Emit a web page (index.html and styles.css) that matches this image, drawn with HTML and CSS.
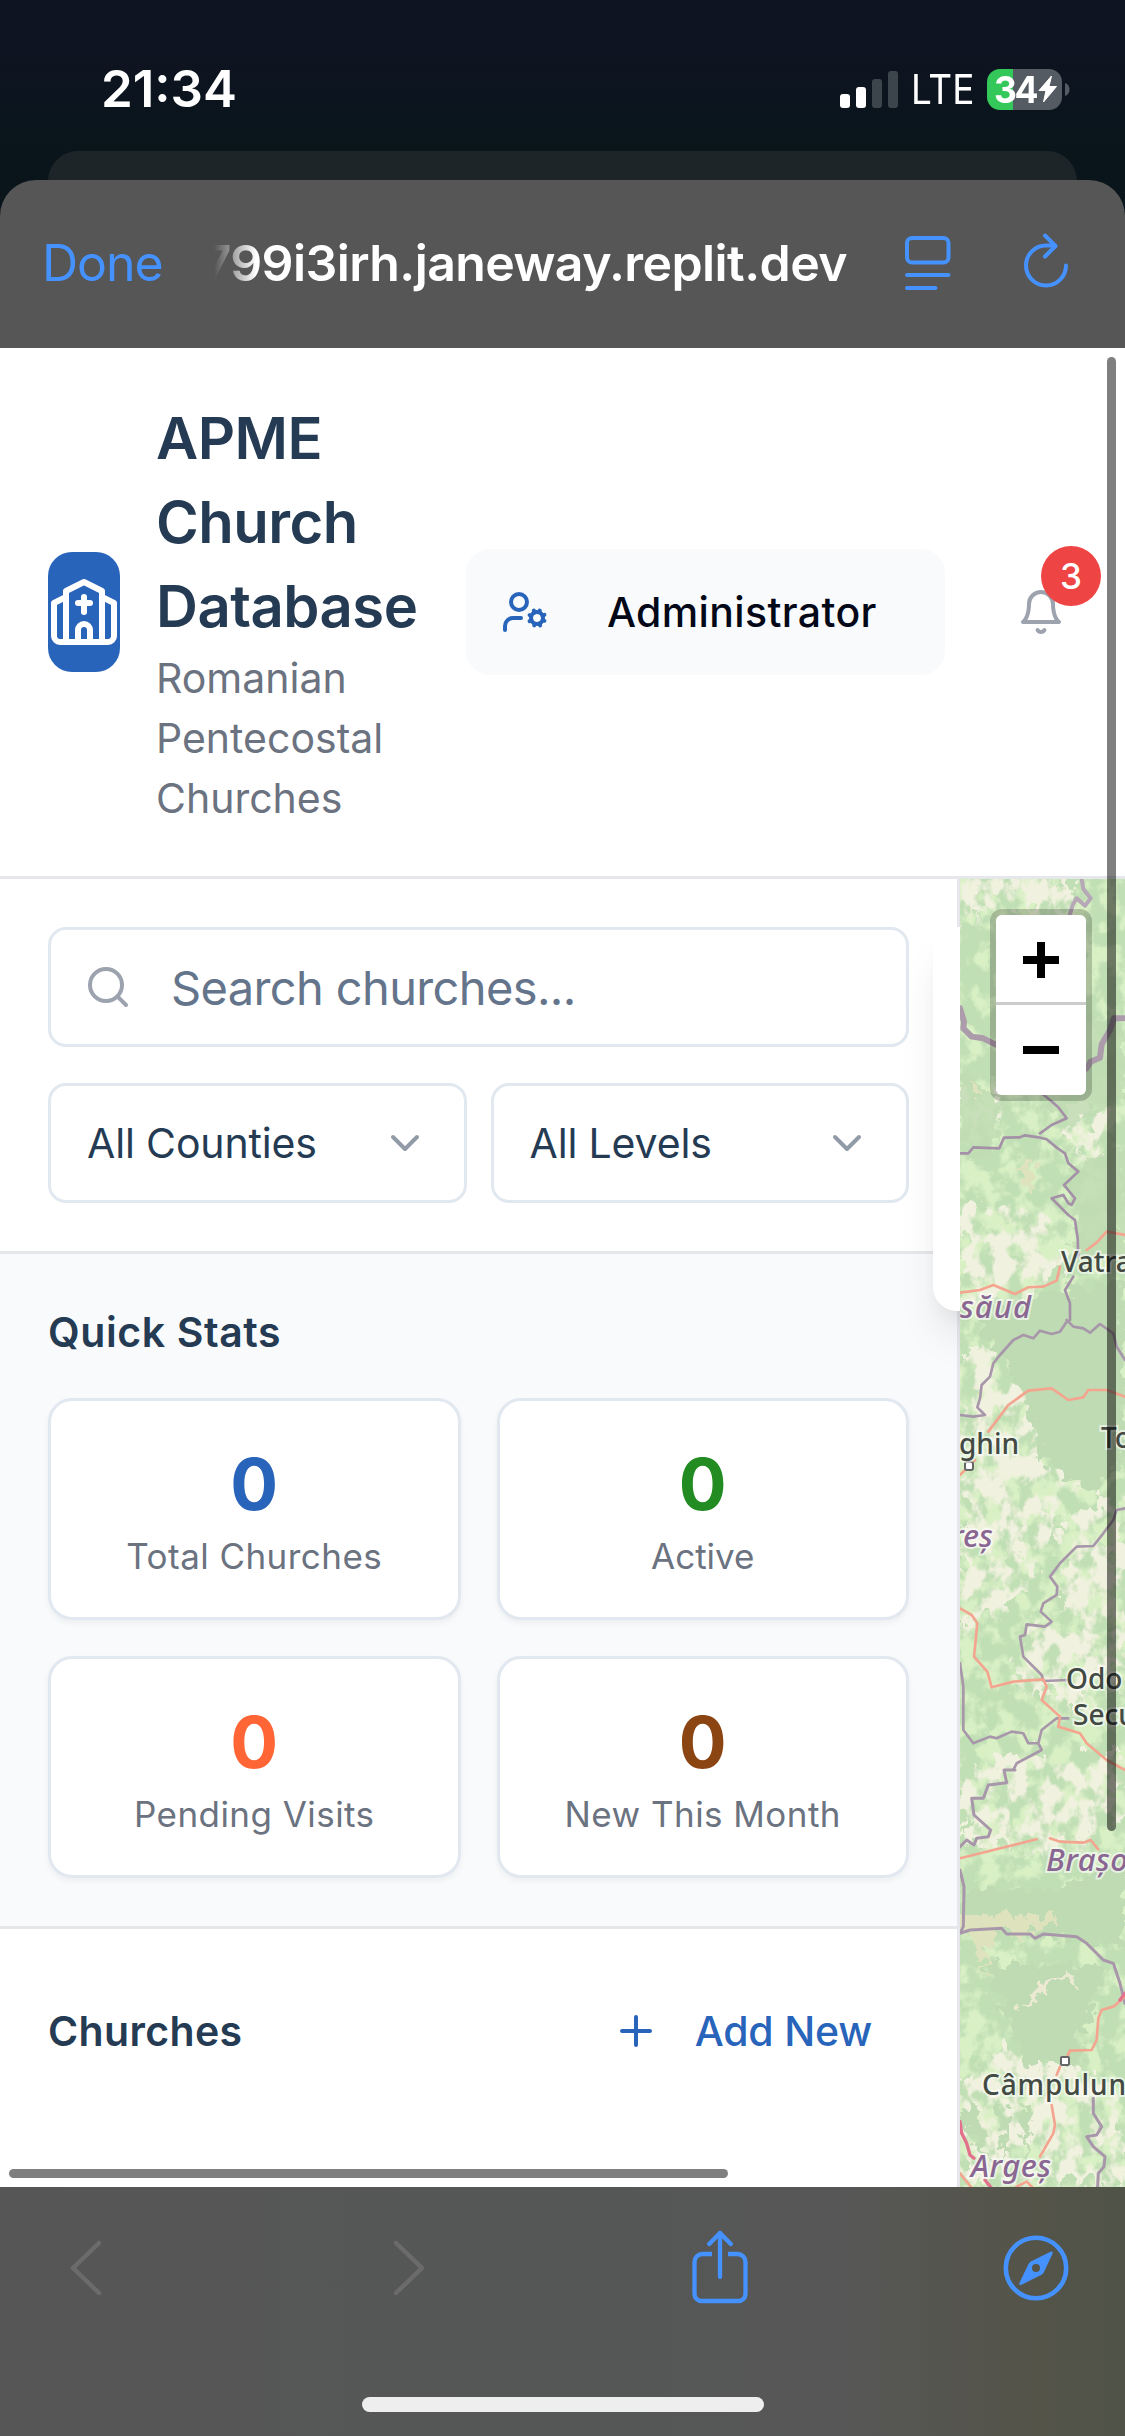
FILE: index.html
```html
<!DOCTYPE html>
<html lang="en">
<head>
<meta charset="utf-8">
<title>APME Church Database</title>
<link rel="stylesheet" href="styles.css">
</head>
<body>
<div class="phone">
  <div class="status">
    <span class="time">21:34</span>
    <div class="indicators">
      <svg class="signal" width="58" height="37" viewBox="0 0 58 37">
        <rect x="0" y="23" width="10" height="14" rx="3" fill="#fff"/>
        <rect x="16" y="16" width="10" height="21" rx="3" fill="#fff"/>
        <rect x="32" y="8" width="10" height="29" rx="3" fill="#3c444c"/>
        <rect x="48" y="0" width="10" height="37" rx="3" fill="#3c444c"/>
      </svg>
      <span class="lte">LTE</span>
      <div class="battery">
        <span class="level">34</span>
        <svg width="19" height="28" viewBox="0 0 19 28"><path d="M13.500 1 1 15.500h7L5.500 27 18.500 11.500h-7.500z" fill="#fff" stroke="#fff" stroke-linejoin="round"/></svg>
      </div>
      <svg class="nub" width="5" height="13" viewBox="0 0 5 13"><path d="M0 0c6 2 6 11 0 13z" fill="#555b62"/></svg>
    </div>
  </div>
  <div class="back-card"></div>

  <div class="sheet">
    <div class="browser-bar">
      <span class="done">Done</span>
      <div class="url"><span>799i3irh.janeway.replit.dev</span></div>
      <svg class="reader" width="46" height="54" viewBox="0 0 46 54" fill="none" stroke="#4592ff" stroke-width="4" stroke-linecap="round">
        <rect x="2" y="2" width="41.500" height="24.500" rx="5"/><path d="M2 39h41.500M2 52h28.500"/>
      </svg>
      <svg class="reload" width="46" height="56" viewBox="0 0 46 56" fill="none" stroke="#4592ff" stroke-width="4" stroke-linecap="round" stroke-linejoin="round">
        <path d="M42 32.500a20 20 0 1 1-20-20h9M21 2.500 31.500 13 21 23.500"/>
      </svg>
    </div>

    <div class="webview">
      <header class="header">
        <div class="logo">
          <svg width="72" height="72" viewBox="0 0 24 24" fill="none" stroke="#fff" stroke-width="2" stroke-linecap="round" stroke-linejoin="round"><path d="m18 7 4 2v11a2 2 0 0 1-2 2H4a2 2 0 0 1-2-2V9l4-2"/><path d="M14 22v-4a2 2 0 0 0-4 0v4"/><path d="M18 22V5l-6-3-6 3v17"/><path d="M12 7v5"/><path d="M10 9h4"/></svg>
        </div>
        <div class="brand">
          <h1>APME Church Database</h1>
          <p>Romanian Pentecostal Churches</p>
        </div>
        <div class="role">
          <svg width="48" height="48" viewBox="0 0 24 24" fill="none" stroke="#2964bb" stroke-width="2" stroke-linecap="round" stroke-linejoin="round"><circle cx="18" cy="15" r="3"/><circle cx="9" cy="7" r="4"/><path d="M10 15H6a4 4 0 0 0-4 4v2"/><path d="m21.700 16.400-.9-.3"/><path d="m15.200 13.900-.9-.3"/><path d="m16.600 18.700.3-.9"/><path d="m19.100 12.200.3-.9"/><path d="m19.600 18.700-.4-1"/><path d="m16.800 12.300-.4-1"/><path d="m14.300 16.600 1-.4"/><path d="m20.700 13.800 1-.4"/></svg>
          <span>Administrator</span>
        </div>
        <div class="bell">
          <svg width="48" height="48" viewBox="0 0 24 24" fill="none" stroke="#9ca3af" stroke-width="2" stroke-linecap="round" stroke-linejoin="round"><path d="M6 8a6 6 0 0 1 12 0c0 7 3 9 3 9H3s3-2 3-9"/><path d="M10.300 21a1.940 1.940 0 0 0 3.400 0"/></svg>
          <span class="badge">3</span>
        </div>
      </header>

      <div class="content">
        <aside class="sidebar">
          <section class="filters">
            <div class="field search">
              <svg width="48" height="48" viewBox="0 0 24 24" fill="none" stroke="#9ca3af" stroke-width="2" stroke-linecap="round" stroke-linejoin="round"><circle cx="11" cy="11" r="8"/><path d="m21 21-4.300-4.300"/></svg>
              <span>Search churches...</span>
            </div>
            <div class="selects">
              <div class="field select"><span>All Counties</span><svg width="48" height="48" viewBox="0 0 24 24" fill="none" stroke="#919ba8" stroke-width="2" stroke-linecap="round" stroke-linejoin="round"><path d="m6 9 6 6 6-6"/></svg></div>
              <div class="field select"><span>All Levels</span><svg width="48" height="48" viewBox="0 0 24 24" fill="none" stroke="#919ba8" stroke-width="2" stroke-linecap="round" stroke-linejoin="round"><path d="m6 9 6 6 6-6"/></svg></div>
            </div>
          </section>
          <section class="stats">
            <h2>Quick Stats</h2>
            <div class="stat-grid">
              <div class="stat"><b class="blue">0</b><span>Total Churches</span></div>
              <div class="stat"><b class="green">0</b><span class="plain">Active</span></div>
              <div class="stat"><b class="orange">0</b><span>Pending Visits</span></div>
              <div class="stat"><b class="brown">0</b><span>New This Month</span></div>
            </div>
          </section>
          <section class="list-head">
            <h2>Churches</h2>
            <div class="add">
              <svg width="48" height="48" viewBox="0 0 24 24" fill="none" stroke="#2964bb" stroke-width="2" stroke-linecap="round"><path d="M5 12h14M12 5v14"/></svg>
              <span>Add New</span>
            </div>
          </section>
        </aside>
        <div class="overlay-panel"></div>

        <div class="map">
          <svg width="165" height="1308" viewBox="0 0 165 1308">
            <defs>
              <filter id="meadow" x="0" y="0" width="100%" height="100%" color-interpolation-filters="sRGB">
                <feTurbulence type="fractalNoise" baseFrequency=".05 .045" numOctaves="4" seed="4"/>
                <feColorMatrix values="0 0 0 0 .85  0 0 0 0 .94  0 0 0 0 .77  6 0 0 0 -2.700"/>
              </filter>
              <filter id="fields" x="0" y="0" width="100%" height="100%" color-interpolation-filters="sRGB">
                <feTurbulence type="fractalNoise" baseFrequency=".06 .045" numOctaves="4" seed="11" result="n"/>
                <feColorMatrix in="n" values="0 0 0 0 1  0 0 0 0 1  0 0 0 0 1  0 6 0 0 -2.500" result="m"/>
                <feDisplacementMap in="SourceGraphic" in2="n" scale="60" xChannelSelector="R" yChannelSelector="G" result="d"/>
                <feComposite in="d" in2="m" operator="in"/>
              </filter>
              <filter id="rough" x="-20%" y="-20%" width="140%" height="140%" color-interpolation-filters="sRGB">
                <feTurbulence type="fractalNoise" baseFrequency=".08" numOctaves="3" seed="2" result="n"/>
                <feDisplacementMap in="SourceGraphic" in2="n" scale="30" xChannelSelector="R" yChannelSelector="G"/>
              </filter>
            </defs>
            <rect width="165" height="1308" fill="#c1dfb5"/>
            <rect width="165" height="1308" filter="url(#meadow)"/>
            <g filter="url(#fields)" fill="#f1f1df">
              <rect width="165" height="1308" fill="none"/>
              <path d="M0 0h110l10 30-40 10-30-10-50 20zM0 215l25 5 5 25-30 10zM100 220l40 20 5 50-30-10zM0 340l60-20 30 20 20 50-40 30-70 10zM0 480l40-20 50 60 20 50-50 20-60 60zM0 600l60-30 50 30 20-20-40 80-20 60-70 40zM100 650l65-40v150l-65-10zM60 760l60-30 45 20v60l-60 30-50-40zM0 890l80-10 85 0v60l-65 40-100-10zM0 1190l50-20 90 30 25 30v80h-165z"/>
            </g>
            <g filter="url(#rough)" fill="#bfdbb3">
              <path d="M15 440l60-25 90-10v170l-30 40-50-30-20-70zM0 1010l100 0 65-30v90l-100-15-65 0zM25 1085h120l-30 100-50 0zM0 1235l14-20 16 70zM35 1225l12 0 0 70zM60 1225h10l-2 70z"/>
              <path d="M70 120l95 30v60l-60 40-30-50zM0 190l40 30-10 60-30-10zM110 290l55-20v110l-50 0z" opacity=".8"/>
            </g>
            <g fill="#dfe3bd" filter="url(#rough)"><path d="M0 1035h95v8l-25 4-8 18-10-16-20 4-8 40-10-36-14-6z"/><path d="M58 290l14-12 6 22-8 12zM12 205l10 6-6 8z"/></g>
            <path d="M60 1130l20-25 30-12 6 10-20 0-28 26z" fill="#ece9d2" filter="url(#rough)"/>

            <g fill="none" stroke-linejoin="round" stroke-linecap="round">
              <g transform="scale(.3333) translate(-180 -27)">
                <g stroke="#a491a8">
                  <path stroke-width="18" stroke="#ac9cab" d="M180 415l12 40 -2 20 25 25 35 5 60 30M560 595l12-20 28-12 5-40 25-43 12-35h40"/>
                  <path stroke-width="12" stroke="#b7a8b8" d="M545 27l5 30 22 28-17 22-25-22-12 20-10 35"/>
                  <path stroke-width="8" d="M425 670l25 20 25 22 25 33-45 20-35 25M180 850h25l15-18 78 3 14-32 48-1 15-6 40 6 25 6 30 25 25 17 10 30 30 25-43 40 33 40-10 20-10-5-15-25-35 10 50 50 20 15 8 55 2 55M520 1220l-25 40 15 40v50"/>
                </g>
                <path stroke="#f3a58f" stroke-width="8" d="M180 1268l60-8 40-15 65 27 40-20 45-2 40-18 10-42M560 1140l30-22 30-33 55 10"/>
              </g>
              <g transform="translate(-60 441) scale(.3333)">
                <g stroke="#a897aa" stroke-width="8">
                  <path d="M500 0l20 20 30 5 20 13 30-26 40 28 10 40 25 40M500 5l-20 30-25 7-35-10-20 23-30-10-30 15-40 45-20 25-10 40-25 25-5 40-8 27 23 23-35 5-40-5"/>
                  <path d="M675 565l-25 5-10 30-30 40-30 38-50 2-50 50-30 40 22 30-2 25-40 25-8 25 33 30-20 15-55-7-5 32-15 5 10 60 55 55 5 18 75-3M180 1030l10 70v130l30 40 50-20 20 5 45-20 35 5 15 30h30l10-40 45-35h35M415 1270l10 20-75 40-10 20"/>
                </g>
                <path stroke="#f3a58f" stroke-width="8" d="M265 335l60-80 60-43 70-7 50 35 45-8 15-22h55l55 20M180 465l45-45M180 865l35 20 17 25-10 100 40 45 13 47 65-17 90-7 10 22-15 40 55 50-5 30 65 20 20 30 60 50 55 30"/>
              </g>
              <g transform="translate(-60 891) scale(.3333)">
                <path stroke="#a897aa" stroke-width="9" d="M345 0h-33l8 38-55 7-15 40h-35l7 50 50 45-7 20-35 5-8 20-22-15-20 20M180 300l12 50-2 120-10 20 30-10 95-5 15 17 70 0 15 13 25-13 100 8 30 20 50 50 30 10 20 60 15 60M580 985v45l25 40-15 25-30 5 20 30 35 30-3 30-17 20-3 60"/>
                <path stroke="#f3a58f" stroke-width="8" d="M180 265l100-25 130-32M450 205l30 10 70 3 22-8 23 28M675 680l-35 30-35 10-10 25-5 65-15 30-65 2-10 23M480 890l-10 25M455 1005l10 60-5 25-40 70M180 1210l40 50M350 1250l30-15 20 20"/>
                <path stroke="#e2718c" stroke-width="10" d="M180 1055l5 35 15 30 10 35 12 10M255 1230l20 25M675 670l-15 20"/>
              </g>
            </g>
            <g fill="#fff" stroke="#666" stroke-width="2"><rect x="5" y="583" width="8" height="8" rx="2"/><rect x="101" y="1178" width="8" height="8" rx="1"/></g>
            <g class="town">
              <text x="101" y="393">Vatra</text>
              <text x="-1" y="575">ghin</text>
              <text x="141" y="569">To</text>
              <text x="106" y="810">Odo</text>
              <text x="113" y="846">Secu</text>
              <text x="22" y="1216" textLength="144">Câmpulun</text>
            </g>
            <g class="county">
              <text x="0" y="439" textLength="71">săud</text>
              <text x="-9" y="668">reș</text>
              <text x="86" y="992" textLength="82">Brașo</text>
              <text x="11" y="1298" textLength="80">Argeș</text>
            </g>
          </svg>
          <div class="zoom">
            <span><svg width="36" height="36" viewBox="0 0 36 36"><path d="M0 18h36M18 0v36" stroke="#000" stroke-width="8"/></svg></span>
            <span><svg width="36" height="36" viewBox="0 0 36 36"><path d="M0 18h36" stroke="#000" stroke-width="8"/></svg></span>
          </div>
        </div>
      </div>
      <div class="scroll-y"></div>
      <div class="scroll-x"></div>
    </div>

    <nav class="toolbar">
      <div class="tools">
        <svg class="back" width="33" height="56" viewBox="0 0 33 56" fill="none" stroke="#6b6b6b" stroke-width="4.500" stroke-linecap="round" stroke-linejoin="round"><path d="M29 3 3 28l26 25"/></svg>
        <svg class="forward" width="33" height="56" viewBox="0 0 33 56" fill="none" stroke="#6b6b6b" stroke-width="4.500" stroke-linecap="round" stroke-linejoin="round"><path d="M4 3l26 25L4 53"/></svg>
        <svg class="share" width="56" height="74" viewBox="0 0 56 74" fill="none" stroke="#4592ff" stroke-width="4.300" stroke-linecap="round" stroke-linejoin="round"><path stroke-linecap="butt" d="M20 24h-9.500a8 8 0 0 0-8 8v32a7 7 0 0 0 7 7h37a7 7 0 0 0 7-7V32a8 8 0 0 0-8-8H36"/><path d="M28 47V3M17.200 14 28 3l10.800 11"/></svg>
        <svg width="66" height="66" viewBox="0 0 66 66"><circle cx="33" cy="33" r="30.200" fill="none" stroke="#4592ff" stroke-width="4.600"/><path fill="#4592ff" fill-rule="evenodd" d="M47.500 16.700q3-1 2 2L41 37q-1 2-2.500 2.800L18.500 49.700q-3 1-2-2L25.500 29q.8-1.500 2.300-2.500zM33 29a4 4 0 1 0 0 8 4 4 0 0 0 0-8z"/></svg>
      </div>
      <div class="home"></div>
    </nav>
  </div>
</div>
</body>
</html>
```
FILE: styles.css
```css
* { box-sizing: border-box; }
body { margin: 0; font-family: Inter, "Noto Sans", sans-serif; }
h1, h2, p { margin: 0; }
svg { display: block; flex: none; }
span { white-space: nowrap; }

.phone {
  width: 1125px;
  height: 2436px;
  overflow: hidden;
  display: flex;
  flex-direction: column;
  background: linear-gradient(#0e1422 0, #0d1420 70px, #09151b 150px, #09151b 260px);
}

/* iOS status bar */
.status {
  height: 151px;
  flex: none;
  display: flex;
  justify-content: space-between;
  padding: 59px 55px 0 101px;
  color: #fff;
}
.time { font-size: 51px; font-weight: 600; line-height: 60px; }
.indicators { display: flex; height: 60px; align-items: center; }
.lte {
  font-size: 41px;
  line-height: 60px;
  margin-left: 13px;
  width: 75px;
  transform: scaleX(.9);
  transform-origin: left;
}
.battery {
  width: 75px;
  height: 41px;
  margin-left: 1px;
  border-radius: 13px;
  background: linear-gradient(90deg, #34c759 26px, #555b62 26px);
  display: flex;
  align-items: center;
  padding-left: 7px;
}
.level { font-size: 37px; font-weight: 700; line-height: 41px; letter-spacing: -2.500px; width: 44px; transform: scaleX(.96); transform-origin: left; }
.nub { margin-left: 3px; }

.back-card {
  flex: none;
  height: 60px;
  margin: 0 48px -31px;
  border-radius: 30px 30px 0 0;
  background: #1e2528;
}

/* in-app browser */
.sheet {
  flex: 1;
  position: relative;
  display: flex;
  flex-direction: column;
  overflow: hidden;
  border-radius: 36px 36px 0 0;
  background: #565656;
}
.browser-bar {
  height: 168px;
  flex: none;
  display: flex;
  align-items: center;
  padding: 0 55px 2px 42px;
}
.done { font-size: 50px; letter-spacing: -1.070px; color: #4592ff; width: 172px; }
.url {
  width: 634px;
  display: flex;
  justify-content: flex-end;
  overflow: hidden;
  font-size: 50px;
  font-weight: 600;
  letter-spacing: -.58px;
  color: #fff;
  -webkit-mask-image: linear-gradient(90deg, transparent, #000 42px);
  mask-image: linear-gradient(90deg, transparent, #000 42px);
}
.reader { margin-left: 58px; }
.reload { margin: -5px 0 0 73px; }

.webview { position: relative; height: 1839px; flex: none; background: #fff; overflow: hidden; }

.header {
  height: 531px;
  display: flex;
  align-items: center;
  padding: 0 0 0 48px;
  border-bottom: 3px solid #e5e7eb;
}
.logo {
  width: 72px;
  height: 120px;
  border-radius: 24px;
  background: #2964bb;
  display: flex;
  align-items: center;
}
.brand { width: 264px; margin-left: 36px; }
h1 { font-size: 58px; font-weight: 600; line-height: 84px; letter-spacing: -.5px; color: #243b53; }
.brand p { font-size: 41px; line-height: 60px; color: #6b7280; }
.role {
  width: 479px;
  height: 126px;
  margin-left: 46px;
  padding-left: 35px;
  border-radius: 24px;
  background: #f9fafc;
  display: flex;
  align-items: center;
  gap: 58px;
  font-size: 41px;
  font-weight: 500;
  letter-spacing: .37px;
  color: #020817;
}
.bell { position: relative; margin-left: 72px; }
.badge {
  position: absolute;
  left: 24px;
  top: -42px;
  width: 60px;
  height: 60px;
  border-radius: 50%;
  background: #ef4444;
  color: #fff;
  font-size: 35px;
  font-weight: 500;
  line-height: 60px;
  text-align: center;
}

.content { position: relative; display: flex; height: 1308px; }
.sidebar { width: 960px; border-right: 3px solid #e5e7eb; background: #fff; }
.filters {
  padding: 48px;
  height: 375px;
  border-bottom: 3px solid #e5e7eb;
  display: flex;
  flex-direction: column;
  gap: 36px;
}
.field {
  height: 120px;
  border: 3px solid #e2e8f0;
  border-radius: 18px;
  background: #fff;
  display: flex;
  align-items: center;
}
.search { padding-left: 33px; gap: 39px; font-size: 47px; letter-spacing: -.63px; color: #64748b; }
.selects { display: grid; grid-template-columns: 1fr 1fr; gap: 24px; }
.select {
  justify-content: space-between;
  padding: 0 35px 0 36px;
  font-size: 41px;
  letter-spacing: -.15px;
  color: #243b53;
}

.stats { height: 675px; padding: 48px; background: #f9fafc; border-bottom: 3px solid #e5e7eb; }
h2 { font-size: 41px; font-weight: 600; line-height: 60px; letter-spacing: .6px; color: #243b53; }
.stat-grid { margin-top: 36px; display: grid; grid-template-columns: 1fr 1fr; gap: 36px; }
.stat {
  height: 222px;
  padding: 35px 0;
  border: 3px solid #e2e8f0;
  border-radius: 24px;
  background: #fff;
  box-shadow: 0 3px 6px rgba(0, 0, 0, .05);
  display: flex;
  flex-direction: column;
  align-items: center;
}
.stat b { font-size: 71px; font-weight: 700; line-height: 96px; }
.stat span { font-size: 35px; line-height: 48px; letter-spacing: .45px; color: #6b7280; }
.stat .plain { letter-spacing: 0; }
.blue { color: #2964bb; }
.green { color: #228b22; }
.orange { color: #ff6535; }
.brown { color: #8b4513; }

.list-head { display: flex; align-items: center; justify-content: space-between; padding: 48px 85px 0 48px; }
.list-head h2 { letter-spacing: .35px; }
.add {
  height: 108px;
  display: flex;
  align-items: center;
  gap: 35px;
  color: #2964bb;
  font-size: 41px;
  font-weight: 500;
  letter-spacing: -.2px;
}

/* floating card, mostly hidden under the map */
.overlay-panel {
  position: absolute;
  left: 933px;
  top: 48px;
  width: 300px;
  height: 384px;
  border-radius: 24px;
  background: #fff;
  box-shadow: 0 30px 45px -9px rgba(0, 0, 0, .1), 0 12px 18px -6px rgba(0, 0, 0, .05);
}

.map { position: relative; width: 165px; overflow: hidden; }
.town { font: 500 28px "Noto Sans", sans-serif; fill: #434943; stroke: rgba(255, 255, 255, .6); stroke-width: 4px; paint-order: stroke; }
.county { font: italic 500 31px "Noto Sans", sans-serif; fill: #8a6692; stroke: rgba(255, 255, 255, .6); stroke-width: 4px; paint-order: stroke; }
.zoom {
  position: absolute;
  left: 30px;
  top: 30px;
  width: 102px;
  border: 6px solid rgba(0, 0, 0, .2);
  border-radius: 12px;
}
.zoom span { height: 90px; background: #fff; background-clip: padding-box; display: flex; align-items: center; justify-content: center; }
.zoom span:first-child { padding-top: 3px; border-bottom: 3px solid #ccc; border-radius: 6px 6px 0 0; }
.zoom span:last-child { border-radius: 0 0 6px 6px; }

.scroll-y { position: absolute; left: 1107px; top: 9px; width: 9px; height: 1474px; border-radius: 5px; background: rgba(0, 0, 0, .5); }
.scroll-x { position: absolute; left: 9px; top: 1821px; width: 719px; height: 9px; border-radius: 5px; background: rgba(0, 0, 0, .5); }

.toolbar { flex: 1; background: linear-gradient(90deg, #565656 0, #555756 55%, #575757 75%, #545449 92%, #505348 100%); }
.tools { display: flex; align-items: center; height: 162px; padding-left: 70px; }
.forward { margin-left: 289px; }
.share { margin: -2px 255px 0 267px; }
.home { width: 402px; height: 15px; margin: 48px auto 0; border-radius: 8px; background: #eee; }
```
